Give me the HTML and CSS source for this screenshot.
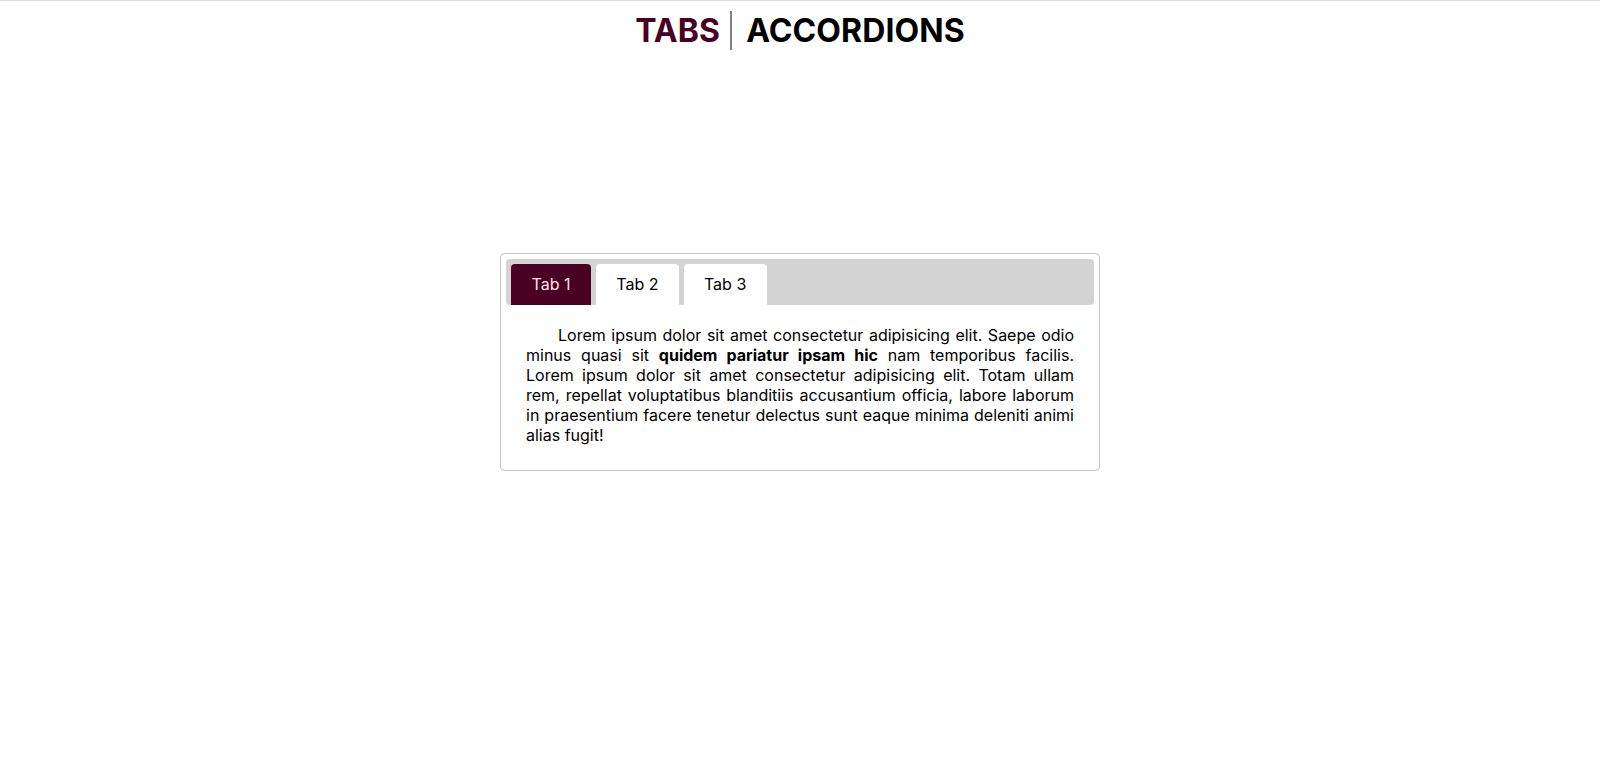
FILE: index.html
```html
<!DOCTYPE html>
<html lang="en">
<head>
<meta charset="UTF-8">
<title>Tabs | Accordions</title>
<link rel="stylesheet" href="styles.css">
</head>
<body>
<header class="topbar">
  <h1 class="title"><span class="title-tabs">TABS</span><span class="title-acc">ACCORDIONS</span></h1>
</header>
<main class="stage">
  <section class="card">
    <nav class="tabbar">
      <button class="tab active">Tab 1</button>
      <button class="tab">Tab 2</button>
      <button class="tab">Tab 3</button>
    </nav>
    <p class="content">Lorem ipsum dolor sit amet consectetur adipisicing elit. Saepe odio minus quasi sit <b>quidem pariatur ipsam hic</b> nam temporibus facilis. Lorem ipsum dolor sit amet consectetur adipisicing elit. Totam ullam rem, repellat voluptatibus blanditiis accusantium officia, labore laborum in praesentium facere tenetur delectus sunt eaque minima deleniti animi alias fugit!</p>
  </section>
</main>
</body>
</html>
```
FILE: styles.css
```css
* { box-sizing: border-box; }
html, body { margin: 0; padding: 0; }
body {
  font-family: Inter, "Noto Sans", sans-serif;
  background: #fff;
  color: #000;
  border-top: 1px solid #dadce0;
  min-height: 100vh;
}
.topbar {
  display: flex;
  justify-content: center;
  padding-top: 10px;
}
.title {
  margin: 0;
  font-size: 32px;
  font-weight: 700;
  line-height: normal;
  display: flex;
  letter-spacing: 0.1px;
}
.title-tabs {
  color: #4a0022;
  padding-right: 10px;
  border-right: 2px solid #808080;
}
.title-acc {
  color: #000;
  padding-left: 14px;
}
.stage {
  display: flex;
  justify-content: center;
  padding-top: 203px;
}
.card {
  width: 600px;
  border: 1px solid #c4c4c4;
  border-radius: 4px;
  padding: 5px;
}
.tabbar {
  display: flex;
  gap: 5px;
  background: #d3d3d3;
  border-radius: 4px;
  padding: 5px 5px 0;
}
.tab {
  font-family: Inter, "Noto Sans", sans-serif;
  font-size: 16px;
  height: 41px;
  padding: 0 20px 2px;
  min-width: 80px;
  border: none;
  border-radius: 4px 4px 0 0;
  background: #fff;
  color: #000;
  cursor: pointer;
}
.tab + .tab {
  padding-left: 20.25px;
  padding-right: 20.25px;
}
.tab.active {
  background: #4a0022;
  color: #ffe4ec;
}
.content {
  margin: 0;
  padding: 20px;
  font-size: 16px;
  line-height: 20px;
  text-align: justify;
  text-indent: 32px;
}
```
